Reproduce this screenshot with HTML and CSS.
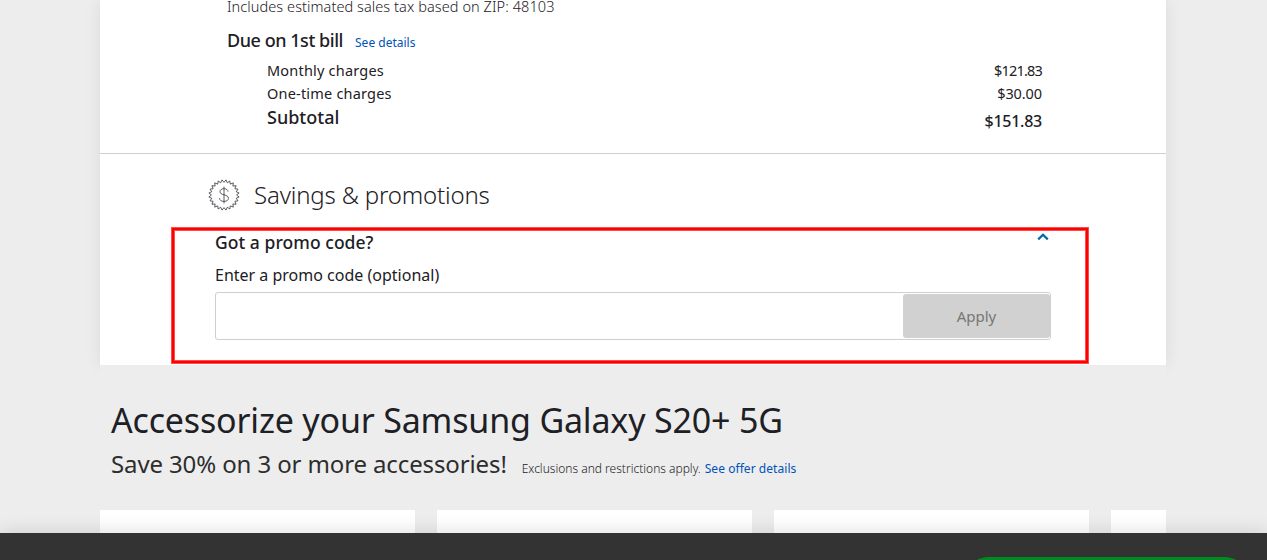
FILE: index.html
```html
<!DOCTYPE html>
<html lang="en">
<head>
    <meta charset="UTF-8">
    <meta name="viewport" content="width=device-width, initial-scale=1.0">
    <title>Cart</title>
    <link rel="stylesheet" href="styles.css">
</head>
<body>
    <main class="page">
        <section class="cart">
            <div class="summary">
                <p class="tax-note">Includes estimated sales tax based on ZIP: 48103</p>
                <div class="bill-title">
                    <h3>Due on 1st bill</h3>
                    <a class="details-link" href="#">See details</a>
                </div>
                <div class="charges">
                    <div class="row monthly"><span>Monthly charges</span><span class="price">$121.83</span></div>
                    <div class="row"><span>One-time charges</span><span class="price">$30.00</span></div>
                    <div class="row subtotal"><span>Subtotal</span><span class="price">$151.83</span></div>
                </div>
            </div>
            <div class="savings">
                <div class="savings-title">
                    <svg class="badge" viewBox="-16 -16 32 32" width="32" height="32">
                        <defs>
                            <path id="teeth" d="M12.6 0L15.1 2L12.2 3.3L14 5.8L10.9 6.3L12.1 9.3L8.9 8.9L9.3 12.1L6.3 10.9L5.8 14L3.3 12.2L2 15.1L0 12.6"/>
                        </defs>
                        <use href="#teeth"/>
                        <use href="#teeth" transform="rotate(90)"/>
                        <use href="#teeth" transform="rotate(180)"/>
                        <use href="#teeth" transform="rotate(270)"/>
                        <path d="M0 -8.5V8.5M4 -3.4C4 -5.3 2.3 -6.3 0 -6.3C-2.4 -6.3 -4 -5.1 -4 -3.3C-4 -1.4 -2.5 -.8 0 -.2C2.7 .5 4.4 1.3 4.4 3.3C4.4 5.3 2.6 6.4 0 6.4C-2.6 6.4 -4.4 5.3 -4.4 3.2"/>
                    </svg>
                    <h2>Savings &amp; promotions</h2>
                </div>
                <div class="promo">
                    <div class="promo-title">
                        <h4>Got a promo code?</h4>
                        <svg class="chevron" viewBox="0 0 12 8" width="12" height="8"><path d="M1.2 6.4L6 1.8L10.8 6.4"/></svg>
                    </div>
                    <label for="promoCode">Enter a promo code (optional)</label>
                    <div class="promo-field">
                        <input type="text" id="promoCode">
                        <button type="button" disabled>Apply</button>
                    </div>
                    <div class="highlight"></div>
                </div>
            </div>
        </section>
        <section class="accessories">
            <h1>Accessorize your Samsung Galaxy S20+ 5G</h1>
            <div class="offer">
                <span class="save">Save 30% on 3 or more accessories!</span>
                <span class="terms">Exclusions and restrictions apply.</span>
                <a class="offer-link" href="#">See offer details</a>
            </div>
            <div class="cards">
                <div class="card"></div>
                <div class="card"></div>
                <div class="card"></div>
                <div class="card"></div>
            </div>
        </section>
    </main>
    <footer class="bottom-bar">
        <div class="checkout"></div>
    </footer>
</body>
</html>
```
FILE: styles.css
```css
* {
    box-sizing: border-box;
}
body {
    margin: 0;
    height: 560px;
    overflow: hidden;
    background-color: #ededed;
    color: #1d2025;
    font-family: "Noto Sans", Arial, sans-serif;
    display: flex;
    flex-direction: column;
}
h1, h2, h3, h4, p {
    margin: 0;
    font-weight: 400;
}
a {
    color: #0053b8;
    text-decoration: none;
}
.page {
    width: 1066px;
    height: 533px;
    margin-left: 100px;
    flex: none;
}
.cart {
    height: 365px;
    background-color: #fff;
    box-shadow: 0 0 16px rgba(0, 0, 0, 0.08);
}
.summary {
    height: 154px;
    padding: 0 124px 0 127px;
    border-bottom: 1px solid #cfcfcf;
    white-space: nowrap;
}
.tax-note {
    height: 27px;
    line-height: 12px;
    font-size: 14.5px;
    font-weight: 300;
    letter-spacing: 0.08px;
}
.bill-title {
    height: 32px;
    display: flex;
    align-items: baseline;
    gap: 12px;
    line-height: 27px;
}
.bill-title h3 {
    font-size: 18px;
    font-weight: 500;
    letter-spacing: -0.45px;
}
.details-link {
    font-size: 12px;
}
.charges {
    padding-left: 40px;
}
.row {
    display: flex;
    justify-content: space-between;
    height: 23px;
    line-height: 23px;
    font-size: 14.5px;
    letter-spacing: 0.2px;
}
.row .price {
    letter-spacing: -0.1px;
}
.monthly .price {
    letter-spacing: -0.8px;
}
.subtotal {
    height: 26px;
    line-height: 25px;
    font-size: 18px;
    font-weight: 500;
    letter-spacing: 0;
}
.subtotal .price {
    padding-top: 4px;
    font-size: 16px;
    letter-spacing: -0.25px;
}
.savings {
    padding: 25px 115px 0;
}
.savings-title {
    display: flex;
    align-items: center;
    gap: 14px;
    height: 32px;
    margin-left: -7px;
}
.savings-title h2 {
    padding-bottom: 2px;
    font-size: 24px;
    font-weight: 300;
    letter-spacing: -0.17px;
}
.badge {
    fill: none;
    stroke: #33353b;
    stroke-width: 0.8;
}
.promo {
    position: relative;
    padding-top: 19px;
}
.promo-title {
    display: flex;
    justify-content: space-between;
    height: 26px;
    line-height: 24px;
}
.promo-title h4 {
    font-size: 17.5px;
    font-weight: 500;
    letter-spacing: 0.05px;
}
.chevron {
    margin: 3px 2px 0 0;
    fill: none;
    stroke: #0069a8;
    stroke-width: 2.2;
}
.promo label {
    display: block;
    height: 36px;
    line-height: 38px;
    font-size: 16px;
}
.promo-field {
    display: flex;
    align-items: center;
    width: 836px;
    height: 48px;
    border: 1px solid #cfcfcf;
    border-radius: 3px;
}
.promo-field input {
    flex: 1;
    height: 44px;
    border: none;
    background: none;
}
.promo-field button {
    width: 147px;
    height: 44px;
    border: none;
    border-radius: 3px;
    background-color: #d1d1d1;
    color: #767676;
    font-family: inherit;
    font-size: 15px;
}
.highlight {
    position: absolute;
    top: 17px;
    left: -43px;
    width: 916px;
    height: 135px;
    border: 2px solid #f00;
    box-shadow: 0 0 0 1px #ff4d4d, inset 0 0 0 1px #ff4d4d;
    pointer-events: none;
}
.accessories {
    position: relative;
    height: 168px;
    padding-top: 31px;
    background-color: #ededed;
    overflow: hidden;
}
.accessories h1 {
    height: 49px;
    padding-left: 11px;
    line-height: 48px;
    font-size: 34px;
    letter-spacing: -0.18px;
    white-space: nowrap;
}
.offer {
    display: flex;
    align-items: baseline;
    height: 65px;
    padding-left: 11px;
    line-height: 37px;
    white-space: nowrap;
}
.save {
    margin-right: 15px;
    color: #2d2d2d;
    font-size: 24px;
    letter-spacing: -0.12px;
}
.terms {
    margin-right: 4px;
    font-size: 12px;
    font-weight: 300;
}
.offer-link {
    font-size: 12px;
    letter-spacing: 0.05px;
}
.cards {
    display: flex;
    gap: 22px;
}
.card {
    flex: none;
    width: 315px;
    height: 23px;
    background-color: #fff;
}
.bottom-bar {
    position: relative;
    flex: none;
    height: 27px;
    padding: 24px 20px 0;
    display: flex;
    justify-content: flex-end;
    background-color: #333;
    box-shadow: 0 0 20px rgba(0, 0, 0, 0.14);
    overflow: hidden;
}
.checkout {
    width: 281px;
    height: 44px;
    border-radius: 22px;
    background-color: #008a20;
}
```
